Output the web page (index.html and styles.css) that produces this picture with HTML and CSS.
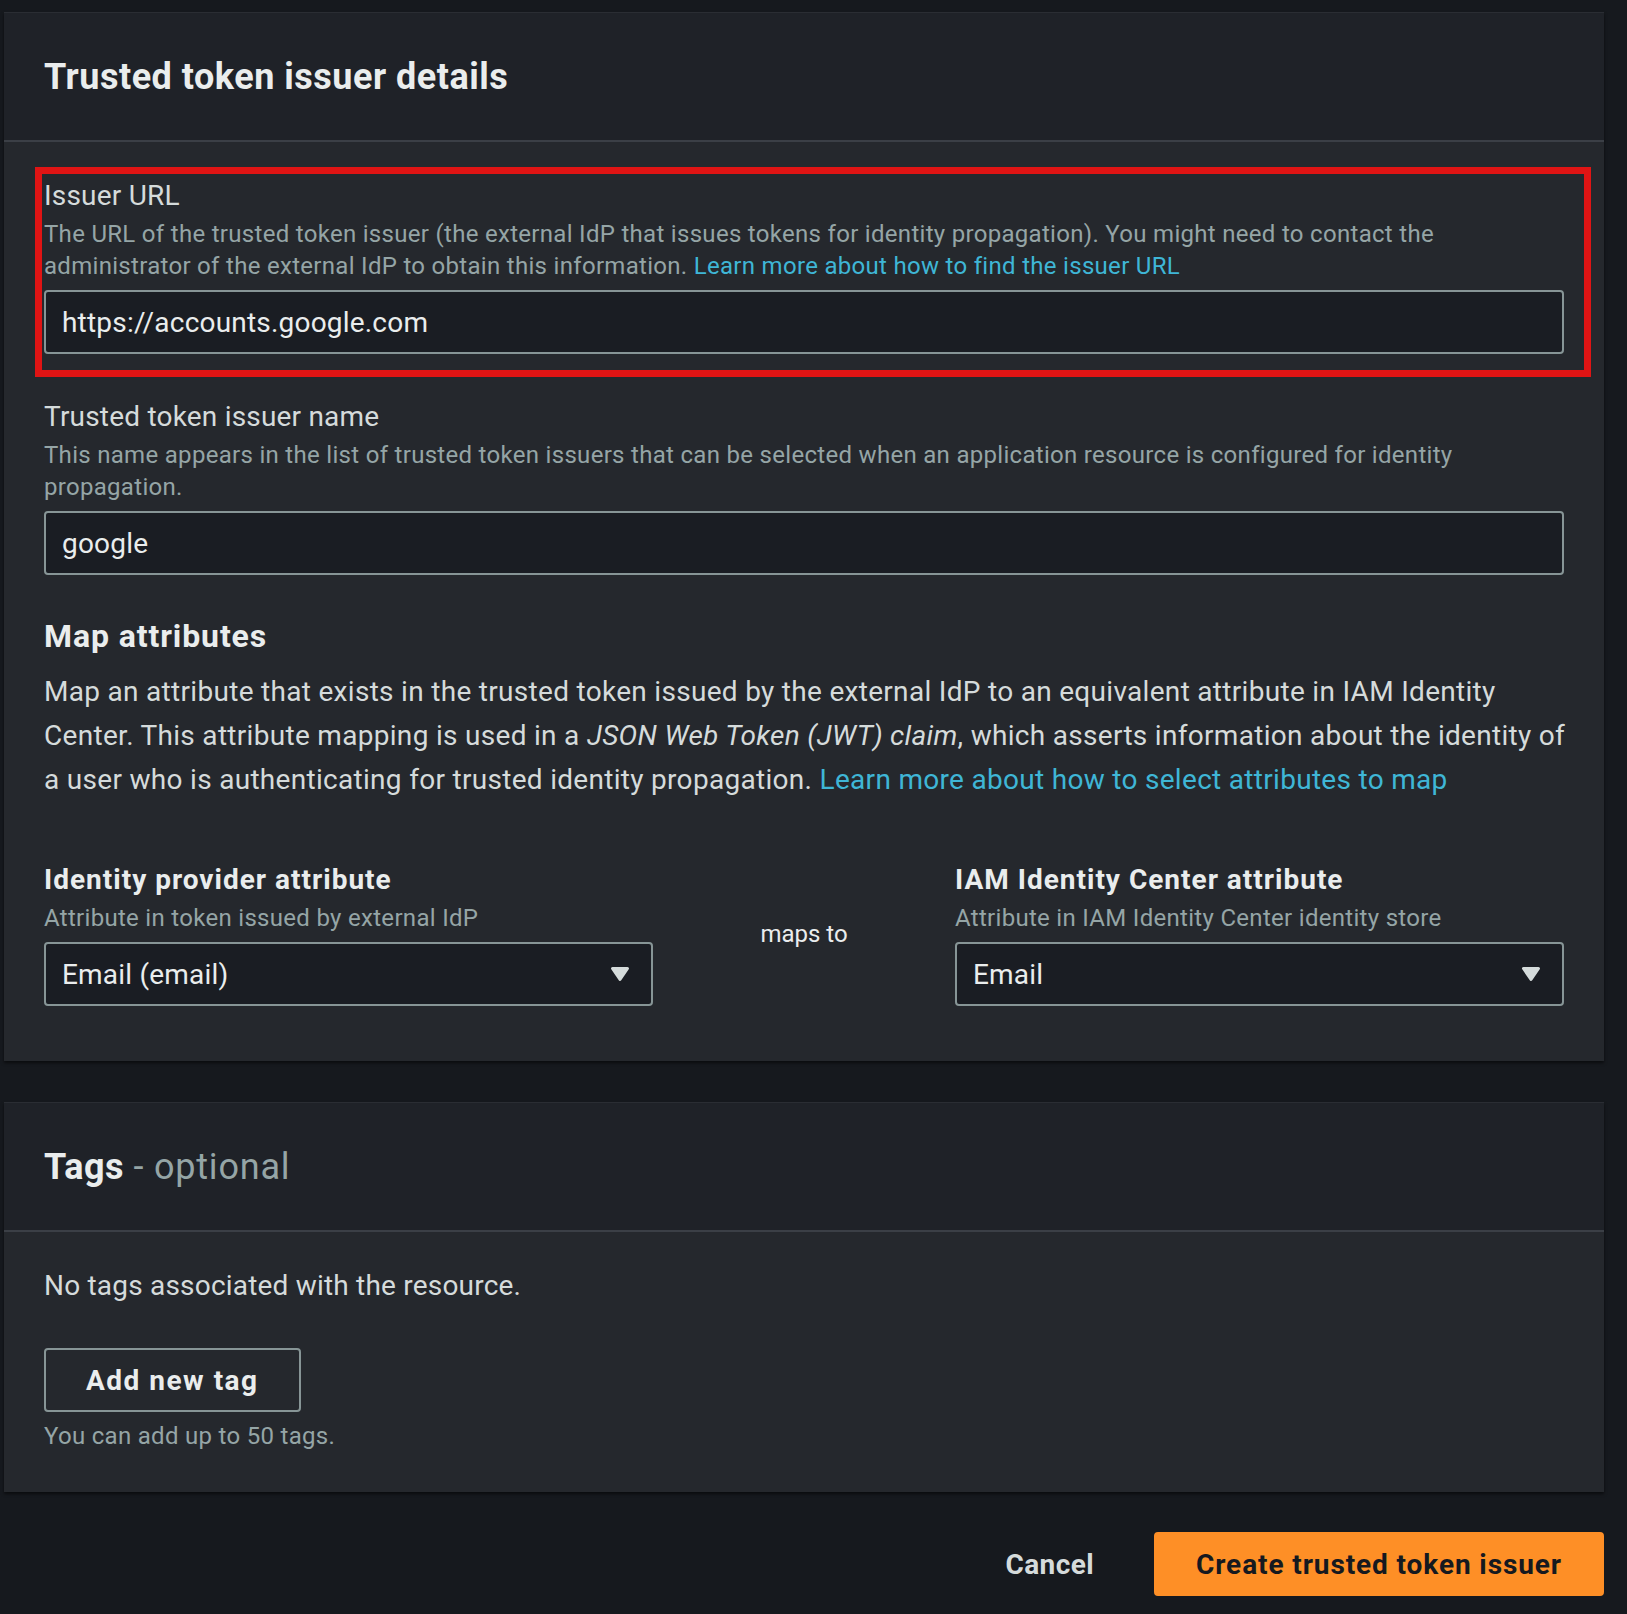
FILE: index.html
```html
<!DOCTYPE html>
<html lang="en">
<head>
<meta charset="utf-8">
<title>Trusted token issuer details</title>
<link rel="stylesheet" href="styles.css">
</head>
<body>
<div class="page">
  <section class="panel">
    <header class="panel-header">
      <h2 class="panel-title">Trusted token issuer details</h2>
    </header>
    <div class="panel-body">
      <div class="stack">
        <div class="field highlight">
          <label class="field-label">Issuer URL</label>
          <p class="field-desc">The URL of the trusted token issuer (the external IdP that issues tokens for identity propagation). You might need to contact the<br>administrator of the external IdP to obtain this information. <a class="link" href="#">Learn more about how to find the issuer URL</a></p>
          <div class="input">https://accounts.google.com</div>
        </div>
        <div class="field">
          <label class="field-label">Trusted token issuer name</label>
          <p class="field-desc">This name appears in the list of trusted token issuers that can be selected when an application resource is configured for identity<br>propagation.</p>
          <div class="input">google</div>
        </div>
        <div class="map-section">
          <h3 class="section-title">Map attributes</h3>
          <p class="section-text">Map an attribute that exists in the trusted token issued by the external IdP to an equivalent attribute in IAM Identity<br>Center. This attribute mapping is used in a <em>JSON Web Token (JWT) claim</em>, which asserts information about the identity of<br>a user who is authenticating for trusted identity propagation. <a class="link" href="#">Learn more about how to select attributes to map</a></p>
          <div class="mapping">
            <div class="map-col">
              <div class="field-label strong">Identity provider attribute</div>
              <p class="field-desc">Attribute in token issued by external IdP</p>
              <div class="input select">
                <span>Email (email)</span>
                <svg class="caret" width="20" height="16" viewBox="0 0 20 16"><path d="M2.5 2.5 H17.5 L10 13.5 Z" fill="#d5dbdb" stroke="#d5dbdb" stroke-width="3" stroke-linejoin="round"/></svg>
              </div>
            </div>
            <div class="maps-to">maps to</div>
            <div class="map-col">
              <div class="field-label strong">IAM Identity Center attribute</div>
              <p class="field-desc">Attribute in IAM Identity Center identity store</p>
              <div class="input select">
                <span>Email</span>
                <svg class="caret" width="20" height="16" viewBox="0 0 20 16"><path d="M2.5 2.5 H17.5 L10 13.5 Z" fill="#d5dbdb" stroke="#d5dbdb" stroke-width="3" stroke-linejoin="round"/></svg>
              </div>
            </div>
          </div>
        </div>
      </div>
    </div>
  </section>

  <section class="panel panel-tags">
    <header class="panel-header">
      <h2 class="panel-title">Tags <span class="optional">- optional</span></h2>
    </header>
    <div class="panel-body">
      <p class="body-text">No tags associated with the resource.</p>
      <button class="btn" type="button">Add new tag</button>
      <p class="field-desc helper">You can add up to 50 tags.</p>
    </div>
  </section>

  <div class="actions">
    <button class="btn-link" type="button">Cancel</button>
    <button class="btn-primary" type="button">Create trusted token issuer</button>
  </div>
</div>
</body>
</html>
```

FILE: styles.css
```css
* {
  box-sizing: border-box;
}

body {
  margin: 0;
  background: #16191e;
  font-family: Roboto, "Liberation Sans", Arial, sans-serif;
  color: #d5dbdb;
}

.page {
  padding: 12px 23px 18px 4px;
}

.panel {
  background: #25282d;
  box-shadow: 0 2px 3px rgba(0, 0, 0, 0.55);
}

.panel-tags {
  margin-top: 41px;
}

.panel-header {
  height: 130px;
  padding: 0 40px;
  display: flex;
  align-items: center;
  background: #1f2228;
  border-top: 1px solid #2a2d33;
  border-bottom: 2px solid #3b3f46;
}

.panel-title {
  margin: 0;
  font-size: 36px;
  line-height: 44px;
  font-weight: 700;
  letter-spacing: 0.5px;
  color: #eaeded;
}

.optional {
  font-weight: 400;
  letter-spacing: 0.8px;
  color: #95a5a6;
}

.panel-body {
  padding: 32px 40px 40px;
}

.stack {
  display: flex;
  flex-direction: column;
  gap: 41px;
}

.highlight {
  border: 7px solid #e01414;
  margin: -7px -27px -23px -9px;
  padding: 0 20px 16px 2px;
}

.field-label {
  display: block;
  font-size: 28px;
  line-height: 44px;
  letter-spacing: 0.2px;
  color: #d5dbdb;
}

.field-label.strong {
  font-weight: 700;
  letter-spacing: 1px;
  color: #eaeded;
}

.field-desc {
  margin: 0;
  font-size: 24px;
  line-height: 32px;
  letter-spacing: 0.3px;
  color: #95a5a6;
}

.link {
  color: #3fb6d6;
  text-decoration: none;
}

.input {
  margin-top: 8px;
  height: 64px;
  padding: 0 16px;
  display: flex;
  align-items: center;
  background: #1a1d23;
  border: 2px solid #879596;
  border-radius: 4px;
  font-size: 28px;
  letter-spacing: 0.2px;
  color: #eaeded;
}

.select {
  justify-content: space-between;
  padding-right: 21px;
}

.caret {
  display: block;
  flex: none;
}

.section-title {
  margin: 0;
  font-size: 32px;
  line-height: 40px;
  font-weight: 700;
  letter-spacing: 0.9px;
  color: #eaeded;
}

.section-text {
  margin: 14px 0 0;
  font-size: 28px;
  line-height: 44px;
  letter-spacing: 0.3px;
  white-space: nowrap;
  color: #d5dbdb;
}

.mapping {
  display: grid;
  grid-template-columns: 1fr 302px 1fr;
  margin: 56px 0 15px;
}

.maps-to {
  align-self: center;
  padding-top: 4px;
  text-align: center;
  font-size: 24px;
  line-height: 32px;
  color: #eaeded;
}

.body-text {
  margin: 0;
  font-size: 28px;
  line-height: 44px;
  letter-spacing: 0.2px;
  color: #d5dbdb;
}

.btn {
  display: block;
  margin-top: 40px;
  height: 64px;
  padding: 0 40px;
  background: transparent;
  border: 2px solid #879596;
  border-radius: 4px;
  font-family: Roboto, "Liberation Sans", Arial, sans-serif;
  font-size: 28px;
  font-weight: 700;
  letter-spacing: 1.5px;
  color: #eaeded;
}

.helper {
  margin-top: 8px;
}

.actions {
  display: flex;
  justify-content: flex-end;
  align-items: center;
  gap: 20px;
  margin-top: 40px;
}

.btn-link {
  height: 64px;
  padding: 0 40px;
  background: none;
  border: 0;
  font-family: Roboto, "Liberation Sans", Arial, sans-serif;
  font-size: 28px;
  font-weight: 700;
  letter-spacing: 0.4px;
  color: #d5dbdb;
}

.btn-primary {
  height: 64px;
  padding: 0 40px;
  background: #fe8f26;
  border: 2px solid #fe8f26;
  border-radius: 4px;
  font-family: Roboto, "Liberation Sans", Arial, sans-serif;
  font-size: 28px;
  font-weight: 700;
  letter-spacing: 0.9px;
  color: #16191f;
}
```
